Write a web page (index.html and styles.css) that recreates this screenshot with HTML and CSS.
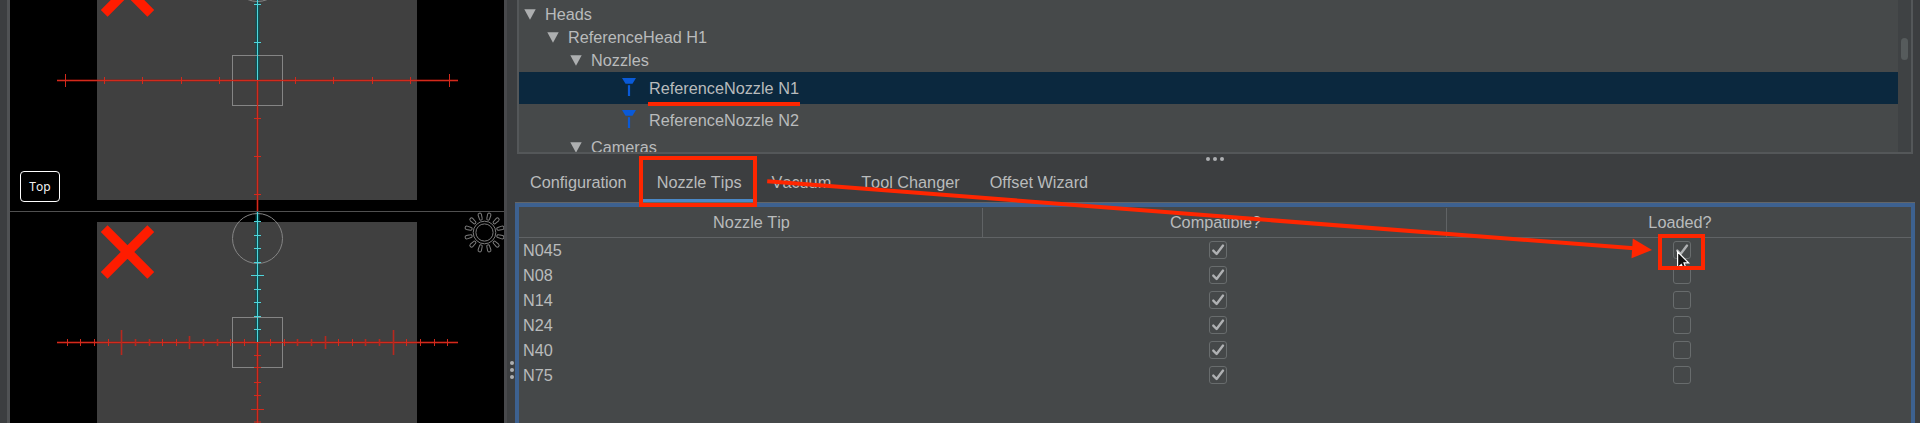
FILE: index.html
```html
<!DOCTYPE html>
<html lang="en">
<head>
<meta charset="utf-8">
<title>Machine Setup</title>
<link rel="stylesheet" href="styles.css">
</head>
<body>
<svg class="defs" width="0" height="0">
  <defs>
    <symbol id="check" viewBox="0 0 16 16"><path d="M3.3 8.6 6.6 12 13 3.6" fill="none" stroke="#afb1b3" stroke-width="2.4" stroke-linecap="round" stroke-linejoin="round"/></symbol>
    <symbol id="nozzle" viewBox="0 0 14 18"><path d="M0 0H14L10.5 5.7H3.5Z" fill="#0a5ad8"/><path d="M5.9 7.2H8.1V18H5.9Z" fill="#0a5ad8"/></symbol>
    <symbol id="tri" viewBox="0 0 12 11"><path d="M.3.3H11.7L6 10.7Z" fill="#adafb0"/></symbol>
    <symbol id="cross" viewBox="0 0 54 54"><path d="M3.7 3.7 50.3 50.3M50.3 3.7 3.7 50.3" stroke="#ff1c00" stroke-width="9.6" fill="none"/></symbol>
    <path id="ray" d="M-1.7 -18.3a1.7 1.7 0 0 1 3.4 0L1.4 -14.2a1.4 1.4 0 0 1 -2.8 0Z"/>
  </defs>
</svg>
<main class="app">
  <div class="edge"></div>
  <section class="cameras">
    <div class="view view-top">
      <svg width="494" height="211" viewBox="10 0 494 211">
        <rect x="97" y="0" width="320" height="200" fill="#404040"/>
        <use href="#cross" x="100.5" y="-37" width="54" height="54"/>
        <g class="glow-red"><path d="M57 80.5H458M257.5 81V211"/></g>
        <g class="glow-cyan"><path d="M257.5 0V80"/></g>
        <g class="guide"><rect x="232.5" y="55.5" width="50" height="50"/><circle cx="257.5" cy="-23.5" r="25"/></g>
        <g class="red"><path d="M57 80.5H458M257.5 81V211"/>
          <path d="M65.5 74V87M449.5 74V87M104.5 77V84M142.5 77V84M181.5 77V84M219.5 77V84M295.5 77V84M333.5 77V84M372.5 77V84M410.5 77V84M254 118.5H261M254 156.5H261M254 194.5H261"/></g>
        <g class="cyan"><path d="M257.5 0V80M254 4.5H261M254 42.5H261"/></g>
      </svg>
      <span class="view-label">Top</span>
    </div>
    <div class="view">
      <svg width="494" height="211" viewBox="10 212 494 211">
        <rect x="97" y="222" width="320" height="201" fill="#404040"/>
        <use href="#cross" x="100.5" y="225" width="54" height="54"/>
        <g class="glow-red"><path d="M57 342.5H458M257.5 343V423"/></g>
        <g class="glow-cyan"><path d="M257.5 212V342"/></g>
        <g class="guide"><rect x="232.5" y="317.5" width="50" height="50"/><circle cx="257.5" cy="238.5" r="25"/></g>
        <g class="red"><path d="M57 342.5H458M257.5 343V423"/>
          <path d="M67.5 339V346M80.5 339V346M94.5 339V346M108.5 339V346M162.5 339V346M176.5 339V346M230.5 339V346M244.5 339V346M270.5 339V346M284.5 339V346M338.5 339V346M352.5 339V346M406.5 339V346M420.5 339V346M434.5 339V346M447.5 339V346"/>
          <path d="M254 355.5H261M254 367.5H261M254 382.5H261M254 395.5H261M251 409.5H264M254 422H261"/></g>
        <g class="red-soft"><path d="M121.5 330V355M393.5 330V355M189.5 336V349M325.5 336V349M135.5 339V346M149.5 339V346M203.5 339V346M217.5 339V346M297.5 339V346M311.5 339V346M365.5 339V346M379.5 339V346"/></g>
        <g class="cyan"><path d="M257.5 212V342M254 221.5H261M254 235.5H261M254 248.5H261M254 262.5H261M251 275.5H264M254 289.5H261M254 302.5H261M254 316.5H261M254 329.5H261"/></g>
        <g class="sun" transform="translate(484.5 232.5)">
          <circle r="11.3"/><circle r="8.6"/>
          <use href="#ray" transform="rotate(15)"/><use href="#ray" transform="rotate(45)"/><use href="#ray" transform="rotate(75)"/>
          <use href="#ray" transform="rotate(105)"/><use href="#ray" transform="rotate(135)"/><use href="#ray" transform="rotate(165)"/>
          <use href="#ray" transform="rotate(195)"/><use href="#ray" transform="rotate(225)"/><use href="#ray" transform="rotate(255)"/>
          <use href="#ray" transform="rotate(285)"/><use href="#ray" transform="rotate(315)"/><use href="#ray" transform="rotate(345)"/>
        </g>
      </svg>
    </div>
  </section>
  <div class="splitter-v"><i class="dot"></i><i class="dot"></i><i class="dot"></i></div>
  <section class="setup">
    <div class="tree">
      <div class="nodes">
        <div class="node level-0"><svg class="tri"><use href="#tri"/></svg>Heads</div>
        <div class="node level-1"><svg class="tri"><use href="#tri"/></svg>ReferenceHead H1</div>
        <div class="node level-2"><svg class="tri"><use href="#tri"/></svg>Nozzles</div>
        <div class="node leaf selected"><svg class="nozzle"><use href="#nozzle"/></svg>ReferenceNozzle N1</div>
        <div class="node leaf"><svg class="nozzle"><use href="#nozzle"/></svg>ReferenceNozzle N2</div>
        <div class="node level-2"><svg class="tri"><use href="#tri"/></svg>Cameras</div>
      </div>
      <div class="scrollbar"><div class="thumb"></div></div>
    </div>
    <div class="splitter-h"><i class="dot"></i><i class="dot"></i><i class="dot"></i></div>
    <nav class="tabs">
      <span class="tab">Configuration</span><span class="tab active">Nozzle Tips</span><span class="tab">Vacuum</span><span class="tab">Tool Changer</span><span class="tab">Offset Wizard</span>
    </nav>
    <div class="table">
      <div class="row head"><span>Nozzle Tip</span><span>Compatible?</span><span>Loaded?</span></div>
      <div class="row"><span>N045</span><span><svg class="box"><use href="#check"/></svg></span><span><svg class="box"><use href="#check"/></svg></span></div>
      <div class="row"><span>N08</span><span><svg class="box"><use href="#check"/></svg></span><span><svg class="box"></svg></span></div>
      <div class="row"><span>N14</span><span><svg class="box"><use href="#check"/></svg></span><span><svg class="box"></svg></span></div>
      <div class="row"><span>N24</span><span><svg class="box"><use href="#check"/></svg></span><span><svg class="box"></svg></span></div>
      <div class="row"><span>N40</span><span><svg class="box"><use href="#check"/></svg></span><span><svg class="box"></svg></span></div>
      <div class="row"><span>N75</span><span><svg class="box"><use href="#check"/></svg></span><span><svg class="box"></svg></span></div>
    </div>
  </section>
</main>
<svg class="annotations" width="1920" height="423" viewBox="0 0 1920 423">
  <path d="M1677.6 251.8V267H1678.5L1681.3 264.4 1682.5 267H1685.5L1684 262.8H1688.6Z" fill="#111" stroke="#fff" stroke-width="1.2"/>
  <g fill="none" stroke="#ff2600" stroke-width="4">
    <path d="M648 104H800"/>
    <rect x="641" y="158" width="114" height="47"/>
    <rect x="1660" y="236" width="43" height="32"/>
    <path d="M767.2 181.2 1634 248.3"/>
  </g>
  <path d="M1632.8 238.5 1652 250 1631.5 258.3Z" fill="#ff2600"/>
</svg>
</body>
</html>
```
FILE: styles.css
```css
* { box-sizing: border-box; }
body {
  margin: 0;
  overflow: hidden;
  background: #3c3e40;
  color: #b9bbbc;
  font: 16.25px "Liberation Sans", Arial, sans-serif;
  font-kerning: none;
}
svg { display: block; }
.defs { position: absolute; }
.app { display: flex; width: 1920px; height: 423px; }

.edge { width: 10px; border-right: 3px solid #505254; }
.cameras { width: 494px; background: #000; }
.view { height: 211px; position: relative; }
.view-top { height: 212px; border-bottom: 1px solid #505050; }
.view-label {
  position: absolute;
  left: 10px;
  top: 171px;
  width: 40px;
  height: 31px;
  border: 1px solid #fff;
  border-radius: 4px;
  color: #f2f2f2;
  font: 12px/30px "Noto Sans", sans-serif;
  font-kerning: none;
  text-align: center;
}
.red, .red-soft, .cyan, .guide, .sun, .glow-red, .glow-cyan { fill: none; }
.red { stroke: #d32a1c; }
.red-soft { stroke: #b8281e; stroke-width: 1.6; }
.cyan { stroke: #4fd6dc; }
.guide { stroke: #858585; }
.glow-red { stroke: rgba(190, 20, 10, .35); stroke-width: 3; }
.glow-cyan { stroke: rgba(0, 85, 90, .7); stroke-width: 4; }
.sun { stroke: #7c7c7c; }

.dot { width: 4px; height: 4px; border-radius: 50%; background: #adafb1; flex: none; }
.splitter-v {
  width: 11px;
  flex: none;
  display: flex;
  flex-direction: column;
  gap: 3px;
  padding: 361px 0 0 3px;
  border-left: 3px solid #48494c;
}

.setup { width: 1400px; display: flex; flex-direction: column; }
.tree {
  display: flex;
  height: 154px;
  margin: 0 2px 0 2px;
  border: 2px solid #545759;
  border-top: 0;
  background: #46494a;
  overflow: hidden;
}
.nodes { flex: 1; padding-top: 3px; }
.node { display: flex; height: 23px; line-height: 23px; white-space: pre; }
.tri { width: 12px; height: 11px; margin: 6px 9px 0 0; flex: none; }
.level-0 { padding-left: 5px; }
.level-1 { padding-left: 28px; }
.level-2 { padding-left: 51px; }
.leaf { height: 32px; line-height: 33px; padding-left: 103px; }
.nozzle { width: 14px; height: 18px; margin: 6px 13px 0 0; flex: none; }
.selected { background: #0b283e; }
.scrollbar { width: 13px; background: #3f4244; padding: 38px 3px 0; }
.thumb { width: 7px; height: 22px; border-radius: 4px; background: #565b5c; }

.splitter-h { height: 12px; display: flex; justify-content: center; gap: 3px; padding-top: 3px; }
.tabs { display: flex; height: 37px; }
.tab { padding: 0 15px; line-height: 33px; height: 37px; white-space: nowrap; }
.tab.active { border-bottom: 4px solid #4a88c7; }

.table {
  flex: 1;
  width: 1400px;
  border: 4px solid #3d6190;
  border-bottom: 0;
  background: #454849;
  box-shadow: 0 -1px #626568;
}
.row { display: grid; grid-template-columns: 464px 464px 464px; height: 25px; line-height: 25px; }
.row span { display: flex; justify-content: center; padding-left: 6px; }
.row span:first-child { justify-content: flex-start; padding-left: 4px; }
.row.head { height: 31px; border-bottom: 1px solid #606365; }
.row.head span, .row.head span:first-child { justify-content: center; padding: 0 0 0 2px; margin: 1px 0 2px; line-height: 29px; }
.row.head span:not(:last-child) { border-right: 1px solid #606365; }
.box { width: 18px; height: 18px; margin-top: 3px; border: 1px solid #686c6d; border-radius: 3px; }

.annotations { position: absolute; left: 0; top: 0; }
```
